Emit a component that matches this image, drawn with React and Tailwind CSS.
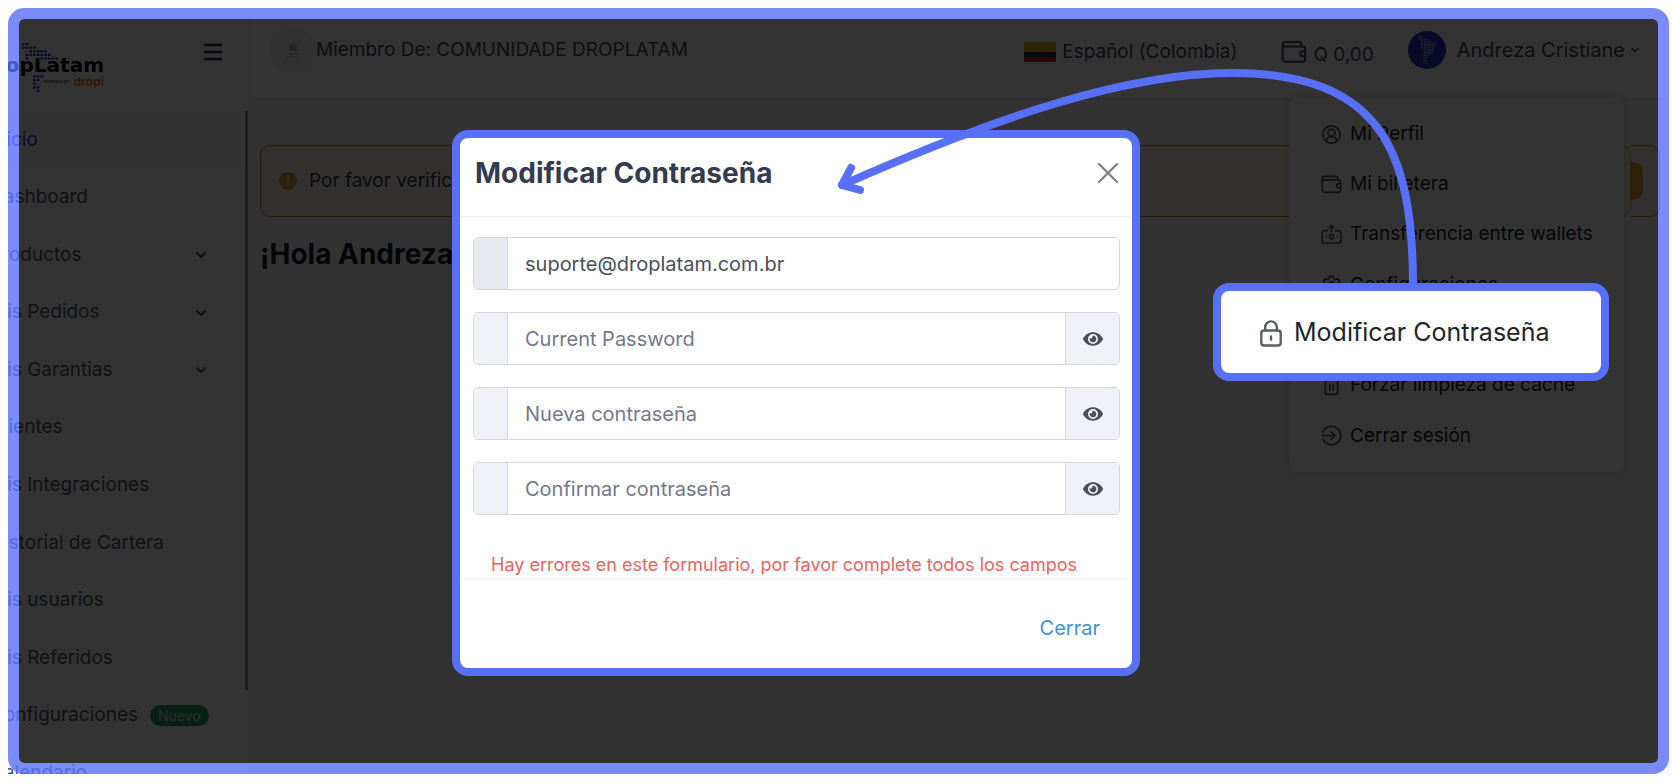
import { useState } from "react";
import { FaEye } from "react-icons/fa";
import {
  ChevronDown,
  CircleUserRound,
  Menu,
  Settings,
  Trash2,
  X,
} from "lucide-react";

const navItems = [
  { label: "Inicio", active: true },
  { label: "Dashboard" },
  { label: "Productos", children: true },
  { label: "Mis Pedidos", children: true },
  { label: "Mis Garantias", children: true },
  { label: "Clientes" },
  { label: "Mis Integraciones" },
  { label: "Historial de Cartera" },
  { label: "Mis usuarios" },
  { label: "Mis Referidos" },
  { label: "Configuraciones", badge: "Nuevo" },
  { label: "Calendario" },
];

function WalletIcon({ className }) {
  return (
    <svg viewBox="0 0 24 24" className={className} fill="none" stroke="currentColor" strokeWidth="1.9" strokeLinejoin="round">
      <path d="M19 7V4.700A2 2 0 0 0 17 2.700H4a2.500 2.500 0 0 0-2.500 2.300v13.500A2.500 2.500 0 0 0 4 21h16a2.300 2.300 0 0 0 2.300-2.300V9.300A2.300 2.300 0 0 0 20 7H4a2.300 2.300 0 0 1-2.500-2" />
      <path d="M22.300 11h-2a2.500 2.500 0 0 0 0 5h2" />
    </svg>
  );
}

function TransferIcon({ className }) {
  return (
    <svg viewBox="0 0 24 24" className={className} fill="none" stroke="currentColor" strokeWidth="1.9" strokeLinecap="round" strokeLinejoin="round">
      <path d="M7.500 7.500h-4a2.200 2.200 0 0 0-2.200 2v10a2.200 2.200 0 0 0 2.200 2.200h17a2.200 2.200 0 0 0 2.200-2.200v-10a2.200 2.200 0 0 0-2.200-2h-4M12 9V2M9.300 4.500 12 1.800l2.700 2.700M5.800 14.500h.1M18.200 14.500h.1" />
      <circle cx="12" cy="14.500" r="2.300" />
    </svg>
  );
}

function ExitIcon({ className }) {
  return (
    <svg viewBox="0 0 24 24" className={className} fill="none" stroke="currentColor" strokeWidth="1.9" strokeLinecap="round" strokeLinejoin="round">
      <path d="M2.500 7.500a10.500 10.500 0 1 1 0 9M1.500 12h14M11.500 7.500 16 12l-4.500 4.500" />
    </svg>
  );
}

function LockIcon({ className }) {
  return (
    <svg viewBox="0 0 22 27" className={className} fill="none" stroke="currentColor" strokeWidth="2.4" strokeLinecap="round">
      <rect x="1.300" y="10.500" width="19.400" height="15" rx="2.800" />
      <path d="M5.200 10.500V7.200a5.800 5.800 0 0 1 11.600 0v3.300M11 16.500v3" />
    </svg>
  );
}

const menuItems = [
  { label: "Mi Perfil", icon: CircleUserRound },
  { label: "Mi billetera", icon: WalletIcon },
  { label: "Transferencia entre wallets", icon: TransferIcon },
  { label: "Configuraciones", icon: Settings },
  { label: "Modificar Contraseña", icon: LockIcon },
  { label: "Forzar limpieza de cache", icon: Trash2 },
  { label: "Cerrar sesión", icon: ExitIcon },
];

// South America drawn as rows of dots: [first column, number of dots]
const mapRows = [
  [0, 3], [0, 4], [1, 6], [2, 8], [2, 11], [2, 12], [2, 11], [2, 10],
  [3, 9], [4, 7], [4, 7], [4, 6], [4, 4], [4, 3], [4, 3], [4, 2], [4, 2], [5, 2],
];

function AvatarMap() {
  return (
    <svg viewBox="0 0 38 38" className="size-[38px] shrink-0" aria-hidden="true">
      <circle cx="19" cy="19" r="19" fill="#2a34ba" />
      {mapRows.map(([start, count], y) =>
        Array.from({ length: count }, (_, x) => (
          <circle key={`${x}-${y}`} cx={10.5 + (start + x) * 1.4} cy={5.5 + y * 1.6} r="0.5" fill="#e8e8f4" />
        ))
      )}
    </svg>
  );
}

const logoDots = [
  [0, 0], [1, 0], [0, 1], [1, 1], [2, 1], [3, 1], [2, 2], [3, 2], [4, 2], [5, 2], [6, 2],
  [1, 3], [2, 3], [3, 3], [4, 3], [5, 3], [6, 3], [7, 3],
  [1, 4], [5, 4], [6, 4], [7, 4], [8, 4], [9, 4],
  [3, 9], [4, 9], [5, 9], [3, 10], [4, 10], [3, 11], [3, 12], [4, 12], [4, 13],
];

function Logo() {
  return (
    <a href="#" aria-label="DropLatam" className="relative block h-14 w-[128px] text-black">
      <svg viewBox="0 0 60 56" className="absolute top-0.5 left-[46px] h-14 w-[60px]" aria-hidden="true">
        {logoDots.map(([x, y]) => (
          <rect key={`${x}-${y}`} x={x * 3.7} y={1 + y * 3.6} width="2.6" height="2.2" fill="#2a2ee8" />
        ))}
      </svg>
      <span className="absolute top-[13px] right-0 font-['DejaVu_Sans'] text-[20px] leading-6 font-bold">
        DropLatam
      </span>
      <span className="absolute top-[34px] right-0 flex items-center gap-1 leading-4">
        <span className="text-[4px]">POWERED BY</span>
        <span className="text-[12px] font-bold text-[#f77f1e]">dropi</span>
      </span>
    </a>
  );
}

function Sidebar() {
  return (
    <aside className="flex w-[322px] shrink-0 flex-col border-r border-[#eff0f5] bg-white">
      <div className="flex h-[103px] shrink-0 items-start justify-between pt-8 pr-6 pl-12">
        <Logo />
        <button aria-label="Menú" className="text-[#2f3342]">
          <Menu className="size-6" strokeWidth={2.5} />
        </button>
      </div>
      <div className="mr-px h-[579px] border-r-[3px] border-[#909090]">
        <nav className="mr-3 grid h-[691px] auto-rows-fr">
          {navItems.map((item) => (
            <a
              key={item.label}
              href="#"
              className={`flex items-center pr-8 pl-[62px] text-[19px] ${
                item.active ? "bg-[#fafafc] text-[#3d49f5]" : "text-[#545a6d]"
              }`}
            >
              {item.label}
              {item.badge && (
                <span className="ml-3 rounded-full bg-[#22a06b] px-2 text-[14px] leading-[21px] text-[#dddddd]">
                  {item.badge}
                </span>
              )}
              {item.children && <ChevronDown className="ml-auto size-4" strokeWidth={3} />}
            </a>
          ))}
        </nav>
      </div>
    </aside>
  );
}

function Header() {
  return (
    <header className="flex h-[92px] shrink-0 items-center border-b-2 border-[#e4e5ec] bg-white pr-7 pb-1.5 pl-5 text-[19px] text-[#454b60]">
      <div className="flex items-center">
        <span className="flex size-[46px] flex-col items-center justify-center rounded-full bg-[#f5f5f7] text-[#8b8d96]">
          <svg viewBox="0 0 16 16" className="size-4" fill="none" stroke="currentColor" aria-hidden="true">
            <path d="M5 3.500h1l.8-1.500h2.400l.8 1.500h1V8H5z" />
            <circle cx="8" cy="5.500" r="1.200" />
            <path d="M2 11.500h12M1 15h14" strokeWidth="0.5" />
          </svg>
        </span>
        <span>Miembro De: COMUNIDADE DROPLATAM</span>
      </div>
      <button className="ml-auto flex items-center gap-1.5 pt-1">
        <svg viewBox="0 0 32 20" className="h-5 w-8" aria-hidden="true">
          <path fill="#dcb31c" d="M0 0h32v10H0z" />
          <path fill="#12307c" d="M0 10h32v5H0z" />
          <path fill="#b8202f" d="M0 15h32v5H0z" />
        </svg>
        Español (Colombia)
      </button>
      <a href="#" className="ml-11 flex items-center gap-1.5 pt-1">
        <WalletIcon className="size-[26px]" />
        <span className="pt-1.5">Q 0,00</span>
      </a>
      <button className="ml-[34px] flex items-center text-[20px]">
        <AvatarMap />
        <span className="ml-[11px]">Andreza Cristiane</span>
        <ChevronDown className="ml-1 size-3" strokeWidth={3} />
      </button>
    </header>
  );
}

function UserMenu() {
  return (
    <div className="absolute top-[90px] right-[38px] pr-[7px]">
      {/* end of the alert that stays visible beside the menu */}
      <div className="absolute top-0 right-0 h-[160px] w-8 bg-[#f8f8fb] pt-[47px]">
        <div className="h-[72px] rounded-r-[10px] border border-l-0 border-[#f1a62c] bg-[#fdf3e2]" />
      </div>
      <ul className="relative grid h-[374px] w-[335px] auto-rows-fr rounded-md bg-white py-[11px] text-[19px] text-[#212529] shadow-[0_0_10px_rgba(0,0,0,0.15)]">
        {menuItems.map(({ label, icon: Icon }) => (
          <li key={label} className="flex">
            <a href="#" className="flex flex-1 items-center gap-2 pl-8">
              <Icon className="size-[21px] text-[#555]" strokeWidth={2} />
              {label}
            </a>
          </li>
        ))}
      </ul>
    </div>
  );
}

function Dashboard() {
  return (
    <div className="flex min-w-0 flex-1 flex-col bg-[#f8f8fb]">
      <Header />
      <main className="pt-[45px] pr-[9px] pl-2.5">
        <div className="flex h-[72px] items-center rounded-[10px] border border-[#c98a28] bg-[#fdf6ea] pr-4 pl-[18px] text-[19px] text-[#343a4f]">
          <span className="mr-3 flex size-[18px] items-center justify-center rounded-full bg-[#d9a03a] text-[13px] text-white">
            !
          </span>
          Por favor verifica tu cuenta
          <button className="ml-auto h-[38px] rounded-[10px] bg-[#d9a03a] px-5 text-white">
            Verificar
          </button>
        </div>
        <h1 className="pt-[19px] text-[28px] leading-9 font-bold text-[#1c2033]">¡Hola Andreza Cristiane!</h1>
      </main>
    </div>
  );
}

function PasswordField({ name, placeholder }) {
  const [visible, setVisible] = useState(false);
  return (
    <div className="flex h-[53px] overflow-hidden rounded-[5px] border border-[#d5d8df] bg-white">
      <span className="w-[34px] border-r border-[#d5d8df] bg-[#f0f1f7]" />
      <input
        name={name}
        type={visible ? "text" : "password"}
        placeholder={placeholder}
        aria-label={placeholder}
        className="min-w-0 flex-1 px-[17px] text-[20px] text-[#495057] outline-none placeholder:text-[#74788d]"
      />
      <button
        type="button"
        aria-label="Mostrar contraseña"
        onClick={() => setVisible(!visible)}
        className="flex w-[54px] items-center justify-center border-l border-[#d5d8df] bg-[#f0f1f7] text-[#495057]"
      >
        <FaEye className="size-5" />
      </button>
    </div>
  );
}

function PasswordModal() {
  return (
    <form
      role="dialog"
      aria-label="Modificar Contraseña"
      className="absolute top-[130px] left-[452px] w-[688px] rounded-2xl border-8 border-[#586ff7] bg-white"
    >
      <div className="flex h-[79px] items-center justify-between border-b border-[#f2f2f6] pr-1.5 pb-2 pl-[15px]">
        <h2 className="text-[28px] font-bold text-[#343a50]">Modificar Contraseña</h2>
        <button type="button" aria-label="Cerrar ventana" className="text-[#808080]">
          <X className="size-9" strokeWidth={1.5} />
        </button>
      </div>
      <div className="flex flex-col gap-[22px] pt-5 pr-3 pl-[13px]">
        <div className="flex h-[53px] overflow-hidden rounded-[5px] border border-[#d5d8df] bg-white">
          <span className="w-[34px] border-r border-[#d5d8df] bg-[#e9eaef]" />
          <input
            type="email"
            aria-label="Correo"
            defaultValue="suporte@droplatam.com.br"
            className="min-w-0 flex-1 px-[17px] text-[20px] text-[#495057] outline-none"
          />
        </div>
        <PasswordField name="current" placeholder="Current Password" />
        <PasswordField name="new" placeholder="Nueva contraseña" />
        <PasswordField name="confirm" placeholder="Confirmar contraseña" />
      </div>
      <p className="px-[31px] pt-[37px] pb-px text-[18px] leading-[26px] text-[#e86464]">
        Hay errores en este formulario, por favor complete todos los campos
      </p>
      <div className="flex h-[89px] items-center justify-end border-t border-[#f5f5f8] px-8 pt-2">
        <button type="button" className="text-[20px] text-[#3f93c8]">
          Cerrar
        </button>
      </div>
    </form>
  );
}

export default function App() {
  return (
    <div className="relative h-screen overflow-hidden bg-white pt-2 pr-[5px] pb-2.5 pl-2 font-['Inter',sans-serif]">
      <div className="relative h-full overflow-hidden">
        <div className="-ml-20 flex h-full">
          <Sidebar />
          <Dashboard />
        </div>
        <UserMenu />
        <div className="absolute inset-0 rounded-2xl border-[11px] border-[#586ff7]/80 bg-black/80 bg-clip-padding" />
      </div>

      <PasswordModal />

      <svg className="pointer-events-none absolute inset-0 size-full" fill="none" stroke="#586ff7" strokeWidth="8" strokeLinecap="round" strokeLinejoin="round" aria-hidden="true">
        <path d="M1413 286C1413 150 1380 73 1232 73C1130 73 1000 115 842 185" />
        <path d="M851 168 842 185 860 190" />
      </svg>

      <button className="absolute top-[283px] left-[1213px] flex h-[98px] w-[396px] items-center gap-3 rounded-2xl border-8 border-[#586ff7] bg-white pt-0.5 pl-[39px] text-[25px] text-[#212529]">
        <LockIcon className="h-[27px] w-[22px] text-[#5b5f64]" />
        Modificar Contraseña
      </button>
    </div>
  );
}
